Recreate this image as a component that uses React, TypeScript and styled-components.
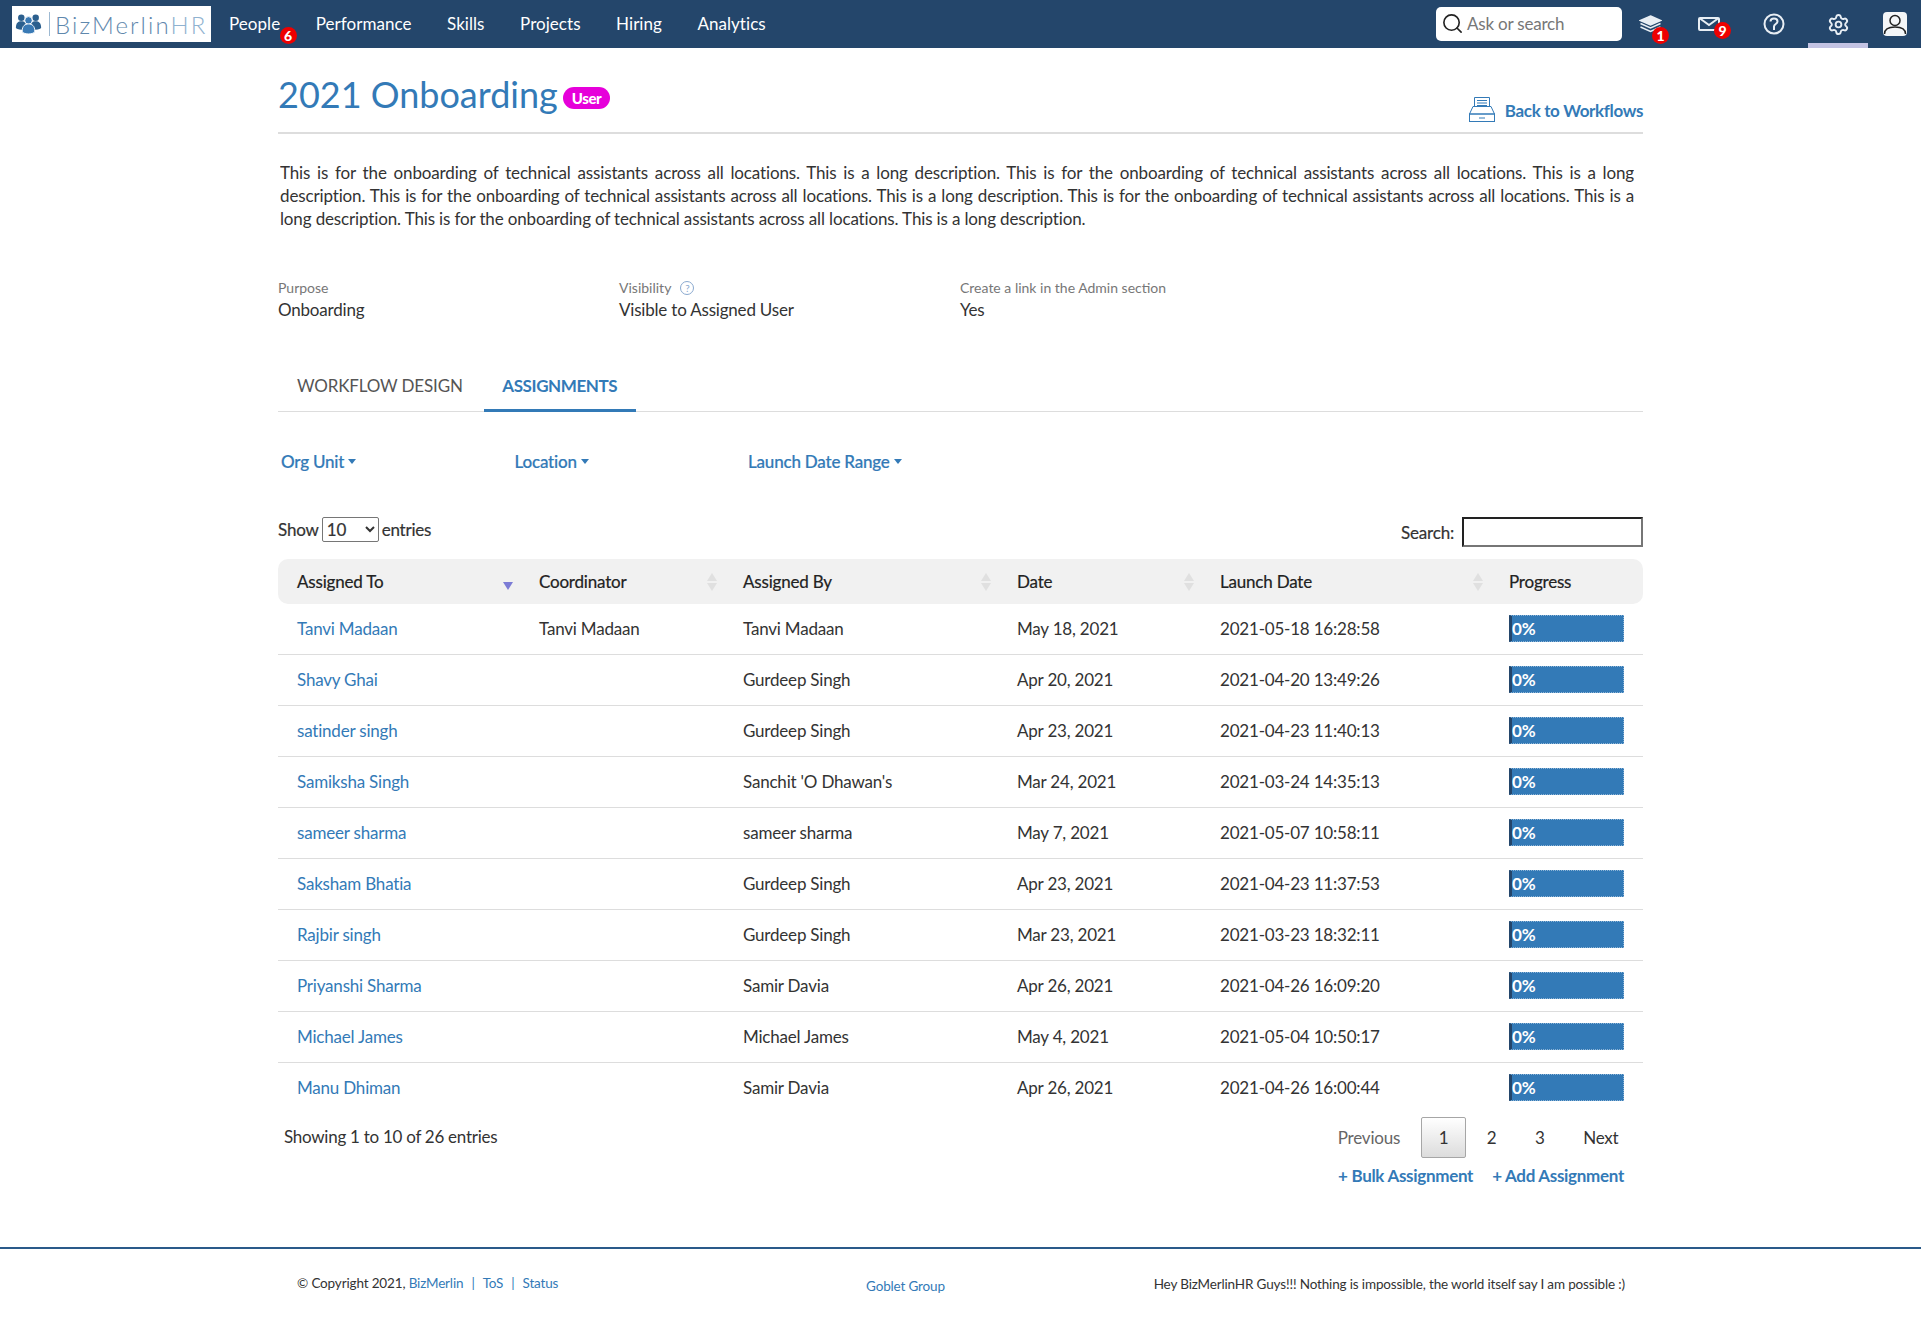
import styled, { createGlobalStyle } from 'styled-components'
import { Search as SearchIcon, Settings } from 'lucide-react'

const GlobalStyle = createGlobalStyle`
  * {
    box-sizing: border-box;
  }
  html, body {
    margin: 0;
    background: #ffffff;
  }
  body {
    font-family: Lato, "Open Sans", sans-serif;
    font-size: 17px;
    line-height: 23px;
    letter-spacing: -0.2px;
    color: #333333;
  }
  a {
    color: #337ab7;
    text-decoration: none;
  }
`

const rows = [
  ['Tanvi Madaan', 'Tanvi Madaan', 'Tanvi Madaan', 'May 18, 2021', '2021-05-18 16:28:58'],
  ['Shavy Ghai', '', 'Gurdeep Singh', 'Apr 20, 2021', '2021-04-20 13:49:26'],
  ['satinder singh', '', 'Gurdeep Singh', 'Apr 23, 2021', '2021-04-23 11:40:13'],
  ['Samiksha Singh', '', "Sanchit 'O Dhawan's", 'Mar 24, 2021', '2021-03-24 14:35:13'],
  ['sameer sharma', '', 'sameer sharma', 'May 7, 2021', '2021-05-07 10:58:11'],
  ['Saksham Bhatia', '', 'Gurdeep Singh', 'Apr 23, 2021', '2021-04-23 11:37:53'],
  ['Rajbir singh', '', 'Gurdeep Singh', 'Mar 23, 2021', '2021-03-23 18:32:11'],
  ['Priyanshi Sharma', '', 'Samir Davia', 'Apr 26, 2021', '2021-04-26 16:09:20'],
  ['Michael James', '', 'Michael James', 'May 4, 2021', '2021-05-04 10:50:17'],
  ['Manu Dhiman', '', 'Samir Davia', 'Apr 26, 2021', '2021-04-26 16:00:44']
]

const description =
  'This is for the onboarding of technical assistants across all locations. This is a long description. '

function LogoMark() {
  return (
    <svg width="27" height="22" viewBox="0 0 30 24">
      <g fill="#2b5f8e">
        <circle cx="7" cy="5" r="3.6" />
        <circle cx="23" cy="5" r="3.6" />
        <path d="M1 16c0-5 2.500-7 6-7s6 2 6 7c0 3-12 3-12 0z" />
        <path d="M17 16c0-5 2.500-7 6-7s6 2 6 7c0 3-12 3-12 0z" />
      </g>
      <circle cx="15" cy="8" r="4.200" fill="#3a7ab5" stroke="#fff" strokeWidth="1" />
      <path d="M8 20c0-6 3-8 7-8s7 2 7 8c0 4-14 4-14 0z" fill="#3a7ab5" stroke="#fff" strokeWidth="1" />
    </svg>
  )
}

function LayersIcon() {
  return (
    <svg width="23" height="18" viewBox="0 0 23 18" fill="none" stroke="#e8eef4" strokeWidth="1.500">
      <path d="M11.500 1 21.500 5.500l-10 4.500-10-4.500z" fill="#e8eef4" />
      <path d="M1.500 8.500l10 4.500 10-4.500" />
      <path d="M1.500 12l10 4.500 10-4.500" />
    </svg>
  )
}

function MailIcon() {
  return (
    <svg width="22" height="14" viewBox="0 0 22 14" fill="none" stroke="#e8eef4" strokeWidth="2">
      <rect x="1" y="1" width="20" height="12" rx="1" />
      <path d="M2 1.500 11 8l9-6.500" />
    </svg>
  )
}

function HelpIcon() {
  return (
    <svg width="22" height="22" viewBox="0 0 22 22" fill="none" stroke="#e8eef4" strokeWidth="2">
      <circle cx="11" cy="11" r="9.500" />
      <path d="M7.500 8.500C7.500 6.500 9 5.500 11 5.500s3.500 1.200 3.500 3c0 2.500-3.500 2.500-3.500 5V17" />
    </svg>
  )
}

function UserIcon() {
  return (
    <svg width="24" height="24" viewBox="0 0 24 24">
      <rect width="24" height="24" rx="4" fill="#f4f6f8" />
      <circle cx="12" cy="8.500" r="5" fill="none" stroke="#222" strokeWidth="1.500" />
      <path d="M1.500 22c0-5 4-7 10.500-7s10.500 2 10.500 7" fill="none" stroke="#222" strokeWidth="1.500" />
    </svg>
  )
}

function DrawerIcon() {
  return (
    <svg width="26" height="25" viewBox="0 0 26 25" fill="none" stroke="#337ab7" strokeWidth="1">
      <path d="M5.500 9V.5h15V9" />
      <path d="M8 3.500h10M8 6h10M8 8.500h10" />
      <path d="M4 9.500h18l3.500 7.500H.5z" />
      <rect x=".5" y="17" width="25" height="7.500" />
      <path d="M10 21h6" />
    </svg>
  )
}

function SortIcon({ active }: { active?: boolean }) {
  return (
    <SortWrap>
      {!active && <SortUp />}
      <SortDown $active={active} />
    </SortWrap>
  )
}

export default function App() {
  return (
    <>
      <GlobalStyle />
      <TopBar>
        <Logo>
          <LogoMark />
          <LogoDivider />
          <LogoText>
            BizMerlin<LogoAccent>HR</LogoAccent>
          </LogoText>
        </Logo>
        <NavItem>
          People
          <PeopleBadge>6</PeopleBadge>
        </NavItem>
        <NavItem>Performance</NavItem>
        <NavItem>Skills</NavItem>
        <NavItem>Projects</NavItem>
        <NavItem>Hiring</NavItem>
        <NavItem>Analytics</NavItem>
        <NavRight>
          <AskBox>
            <SearchIcon size={23} color="#222" strokeWidth={1.7} />
            <span>Ask or search</span>
          </AskBox>
          <NavIcon $width={56}>
            <LayersIcon />
            <IconBadge $top={27} $left={30}>1</IconBadge>
          </NavIcon>
          <NavIcon $width={62}>
            <MailIcon />
            <IconBadge $top={22} $left={36}>9</IconBadge>
          </NavIcon>
          <NavIcon $width={68}>
            <HelpIcon />
          </NavIcon>
          <NavIcon $width={60} $active>
            <Settings size={23} color="#e8eef4" strokeWidth={2} />
          </NavIcon>
          <NavIcon $width={53}>
            <UserIcon />
          </NavIcon>
        </NavRight>
      </TopBar>

      <Page>
        <TitleRow>
          <Title>
            2021 Onboarding <UserPill>User</UserPill>
          </Title>
          <BackLink href="#">
            <DrawerIcon />
            Back to Workflows
          </BackLink>
        </TitleRow>

        <Description>
          {description}
          {description}
          {description}
          {description}
          {description}
        </Description>

        <MetaRow>
          <div>
            <MetaLabel>Purpose</MetaLabel>
            <div>Onboarding</div>
          </div>
          <div>
            <MetaLabel>
              Visibility <HintMark>?</HintMark>
            </MetaLabel>
            <div>Visible to Assigned User</div>
          </div>
          <div>
            <MetaLabel>Create a link in the Admin section</MetaLabel>
            <div>Yes</div>
          </div>
        </MetaRow>

        <Tabs>
          <Tab>WORKFLOW DESIGN</Tab>
          <Tab $active>ASSIGNMENTS</Tab>
        </Tabs>

        <Filters>
          <Filter href="#">
            Org Unit
            <Caret />
          </Filter>
          <Filter href="#">
            Location
            <Caret />
          </Filter>
          <Filter href="#">
            Launch Date Range
            <Caret />
          </Filter>
        </Filters>

        <TableControls>
          <ShowEntries>
            Show
            <EntriesSelect defaultValue="10">
              <option>10</option>
              <option>25</option>
              <option>50</option>
            </EntriesSelect>
            entries
          </ShowEntries>
          <SearchLabel>
            Search:
            <SearchInput type="text" />
          </SearchLabel>
        </TableControls>

        <Table>
          <colgroup>
            <col width="242" />
            <col width="204" />
            <col width="274" />
            <col width="203" />
            <col width="289" />
            <col width="153" />
          </colgroup>
          <thead>
            <tr>
              <HeadCell>
                <HeadInner>
                  Assigned To
                  <SortIcon active />
                </HeadInner>
              </HeadCell>
              <HeadCell>
                <HeadInner>
                  Coordinator
                  <SortIcon />
                </HeadInner>
              </HeadCell>
              <HeadCell>
                <HeadInner>
                  Assigned By
                  <SortIcon />
                </HeadInner>
              </HeadCell>
              <HeadCell>
                <HeadInner>
                  Date
                  <SortIcon />
                </HeadInner>
              </HeadCell>
              <HeadCell>
                <HeadInner>
                  Launch Date
                  <SortIcon />
                </HeadInner>
              </HeadCell>
              <HeadCell>Progress</HeadCell>
            </tr>
          </thead>
          <tbody>
            {rows.map((row) => (
              <Row key={row[4]}>
                <Cell>
                  <a href="#">{row[0]}</a>
                </Cell>
                <Cell>{row[1]}</Cell>
                <Cell>{row[2]}</Cell>
                <Cell>{row[3]}</Cell>
                <Cell>{row[4]}</Cell>
                <Cell>
                  <ProgressBar>0%</ProgressBar>
                </Cell>
              </Row>
            ))}
          </tbody>
        </Table>

        <TableFooter>
          <EntriesInfo>Showing 1 to 10 of 26 entries</EntriesInfo>
          <FooterActions>
            <Pagination>
              <PageLink $muted>Previous</PageLink>
              <PageLink $current>1</PageLink>
              <PageLink>2</PageLink>
              <PageLink>3</PageLink>
              <PageLink>Next</PageLink>
            </Pagination>
            <AddLinks>
              <a href="#">+ Bulk Assignment</a>
              <a href="#">+ Add Assignment</a>
            </AddLinks>
          </FooterActions>
        </TableFooter>
      </Page>

      <Footer>
        <FooterInner>
          <div>
            © Copyright 2021, <a href="#">BizMerlin</a>
            <FooterSep>|</FooterSep>
            <a href="#">ToS</a>
            <FooterSep>|</FooterSep>
            <a href="#">Status</a>
          </div>
          <GobletLink href="#">Goblet Group</GobletLink>
          <Tagline>Hey BizMerlinHR Guys!!! Nothing is impossible, the world itself say I am possible :)</Tagline>
        </FooterInner>
      </Footer>
    </>
  )
}

const TopBar = styled.header`
  display: flex;
  align-items: center;
  height: 48px;
  padding-left: 12px;
  background: #24466b;
`

const Logo = styled.div`
  display: flex;
  align-items: center;
  gap: 7px;
  width: 199px;
  height: 36px;
  padding-left: 3px;
  background: #ffffff;
`

const LogoDivider = styled.span`
  width: 1px;
  height: 24px;
  background: #9db9d2;
`

const LogoText = styled.span`
  margin-left: -2px;
  font-size: 24px;
  font-weight: 300;
  letter-spacing: 2.100px;
  white-space: nowrap;
  color: #5f88ad;
`

const LogoAccent = styled.span`
  color: #8fb2d0;
`

const NavItem = styled.a`
  position: relative;
  padding: 0 17.500px 2px;
  margin-left: 0.500px;
  font-size: 17px;
  letter-spacing: 0.05px;
  color: #ffffff;
`

const PeopleBadge = styled.span`
  position: absolute;
  top: 15px;
  left: 68px;
  width: 17px;
  height: 17px;
  border-radius: 50%;
  background: #ee0000;
  font-size: 14px;
  font-weight: 900;
  line-height: 17px;
  text-align: center;
  color: #ffffff;
`

const NavRight = styled.div`
  display: flex;
  align-items: center;
  height: 100%;
  margin-left: auto;
`

const AskBox = styled.div`
  display: flex;
  align-items: center;
  gap: 3px;
  width: 186px;
  height: 34px;
  padding: 0 0 2px 5px;
  border-radius: 5px;
  background: #ffffff;
  font-size: 17px;
  color: #777777;
`

const NavIcon = styled.div<{ $active?: boolean; $width: number }>`
  position: relative;
  display: flex;
  align-items: center;
  justify-content: center;
  width: ${(p) => p.$width}px;
  height: 100%;
  padding-top: 5px;
  border-bottom: 5px solid ${(p) => (p.$active ? '#c3c3e3' : 'transparent')};
`

const IconBadge = styled.span<{ $top: number; $left: number }>`
  position: absolute;
  top: ${(p) => p.$top}px;
  left: ${(p) => p.$left}px;
  width: 17px;
  height: 17px;
  border-radius: 50%;
  background: #ee0000;
  font-size: 14px;
  font-weight: 900;
  line-height: 17px;
  text-align: center;
  color: #ffffff;
`

const Page = styled.main`
  width: 1365px;
  margin-left: 278px;
`

const TitleRow = styled.div`
  display: flex;
  justify-content: space-between;
  align-items: flex-end;
  height: 86px;
  padding-bottom: 10px;
  border-bottom: 2px solid #dddddd;
`

const Title = styled.h1`
  display: flex;
  align-items: center;
  gap: 5px;
  margin: 0 0 5px;
  font-size: 36px;
  font-weight: 400;
  line-height: 46px;
  letter-spacing: 0;
  color: #337ab7;
`

const UserPill = styled.span`
  margin-top: 8px;
  padding: 0 9px;
  border-radius: 12px;
  background: #e600da;
  font-size: 15px;
  font-weight: 900;
  line-height: 22px;
  letter-spacing: -0.4px;
  color: #ffffff;
`

const BackLink = styled.a`
  display: flex;
  align-items: flex-end;
  gap: 10px;
  font-size: 17px;
  font-weight: 700;
  line-height: 22px;
  letter-spacing: -0.35px;
`

const Description = styled.p`
  width: 1354px;
  height: 69px;
  margin: 27px 0 0 2px;
  letter-spacing: -0.14px;
  text-align: justify;
  overflow: hidden;
`

const MetaRow = styled.div`
  display: grid;
  grid-template-columns: 341px 341px 341px;
  margin-top: 47px;
`

const MetaLabel = styled.div`
  display: flex;
  align-items: center;
  gap: 9px;
  font-size: 14px;
  line-height: 21px;
  letter-spacing: 0;
  color: #777777;
`

const HintMark = styled.span`
  display: inline-block;
  width: 14px;
  height: 14px;
  border: 1px solid #8aa9cf;
  border-radius: 50%;
  font-size: 10px;
  line-height: 12px;
  text-align: center;
  color: #8aa9cf;
`

const Tabs = styled.div`
  display: flex;
  height: 53px;
  margin-top: 38px;
  border-bottom: 1px solid #dddddd;
`

const Tab = styled.a<{ $active?: boolean }>`
  display: flex;
  align-items: center;
  justify-content: center;
  height: 53px;
  padding: ${(p) => (p.$active ? '3px 18.500px 0' : '3px 21px 0 19px')};
  border-bottom: 3px solid ${(p) => (p.$active ? '#337ab7' : 'transparent')};
  font-size: 17px;
  font-weight: ${(p) => (p.$active ? 700 : 400)};
  letter-spacing: ${(p) => (p.$active ? '-0.4px' : '-0.15px')};
  color: ${(p) => (p.$active ? '#337ab7' : '#555555')};
`

const Filters = styled.div`
  display: grid;
  grid-template-columns: 233.500px 233.500px auto;
  margin-top: 38px;
  padding-left: 3px;
`

const Filter = styled.a`
  display: flex;
  align-items: center;
  font-weight: 500;
  -webkit-text-stroke: 0.2px #337ab7;
`

const Caret = styled.span`
  width: 0;
  height: 0;
  margin-left: 4px;
  border-top: 5px solid #337ab7;
  border-left: 4.500px solid transparent;
  border-right: 4.500px solid transparent;
`

const TableControls = styled.div`
  display: flex;
  align-items: flex-start;
  justify-content: space-between;
  margin-top: 44px;
`

const ShowEntries = styled.label`
  display: flex;
  align-items: center;
  gap: 3px;
  height: 25px;
  -webkit-text-stroke: 0.2px #333333;
`

const EntriesSelect = styled.select`
  width: 57px;
  height: 25px;
  padding-left: 0;
  border: 1px solid #767676;
  border-radius: 2px;
  background: #ffffff;
  font-family: inherit;
  font-size: 17px;
  color: #333333;
`

const SearchLabel = styled.label`
  display: flex;
  align-items: center;
  gap: 8px;
  -webkit-text-stroke: 0.2px #333333;
`

const SearchInput = styled.input`
  width: 181px;
  height: 30px;
  border: 2px solid;
  border-color: #222222 #767676 #767676 #222222;
  background: #ffffff;
`

const Table = styled.table`
  width: 1365px;
  margin-top: 12px;
  border-collapse: separate;
  border-spacing: 0;
  table-layout: fixed;
`

const HeadCell = styled.th`
  height: 45px;
  padding: 0 0 0 19px;
  background: #f1f1f1;
  font-size: 17px;
  font-weight: 400;
  text-align: left;
  color: #222222;
  -webkit-text-stroke: 0.2px #222222;

  &:first-child {
    border-radius: 10px 0 0 10px;
  }
  &:last-child {
    border-radius: 0 10px 10px 0;
  }
`

const HeadInner = styled.div`
  display: flex;
  align-items: center;
  justify-content: space-between;
  padding-right: 7px;
`

const SortWrap = styled.span`
  display: flex;
  flex-direction: column;
  gap: 2px;
  justify-content: center;
  min-height: 19px;
`

const SortUp = styled.span`
  width: 0;
  height: 0;
  border-bottom: 8px solid #e0e0e0;
  border-left: 5px solid transparent;
  border-right: 5px solid transparent;
`

const SortDown = styled.span<{ $active?: boolean }>`
  width: 0;
  height: 0;
  margin-top: ${(p) => (p.$active ? '9px' : '0')};
  border-top: 8px solid ${(p) => (p.$active ? '#7c7cd6' : '#e0e0e0')};
  border-left: 5px solid transparent;
  border-right: 5px solid transparent;
`

const Row = styled.tr`
  &:not(:last-child) td {
    border-bottom: 1px solid #dddddd;
  }
`

const Cell = styled.td`
  height: 51px;
  padding: 0 0 2px 19px;
  color: #333333;
`

const ProgressBar = styled.div`
  width: 115px;
  height: 27px;
  border: 1px dotted #8db4d6;
  border-left: 3px solid #24466b;
  background: #337ab7;
  font-weight: 700;
  line-height: 25px;
  color: #ffffff;
`

const TableFooter = styled.div`
  display: flex;
  justify-content: space-between;
  padding: 3px 0 0 6px;
`

const EntriesInfo = styled.div`
  margin-top: 8px;
  letter-spacing: -0.27px;
`

const FooterActions = styled.div`
  display: flex;
  flex-direction: column;
  align-items: flex-end;
  padding-right: 7px;
`

const Pagination = styled.div`
  display: flex;
  align-items: center;
  gap: 3.500px;
`

const PageLink = styled.a<{ $current?: boolean; $muted?: boolean }>`
  display: flex;
  align-items: center;
  height: 41px;
  padding: 0 16.500px;
  border: 1px solid ${(p) => (p.$current ? '#a6a6a6' : 'transparent')};
  border-radius: 2px;
  background: ${(p) => (p.$current ? 'linear-gradient(to bottom, #ffffff 0%, #dcdcdc 100%)' : 'transparent')};
  color: ${(p) => (p.$muted ? '#666666' : '#333333')};
`

const AddLinks = styled.div`
  display: flex;
  gap: 19px;
  margin: 6px 12px 0 0;
  font-weight: 700;
  letter-spacing: -0.3px;
`

const Footer = styled.footer`
  height: 94px;
  margin-top: 60px;
  border-top: 2px solid #2a5a8a;
`

const FooterInner = styled.div`
  display: grid;
  grid-template-columns: 569px auto 1fr;
  width: 1365px;
  margin-left: 278px;
  padding: 24px 18px 0 19px;
  font-size: 13.500px;
  line-height: 20px;
  letter-spacing: -0.15px;
`

const FooterSep = styled.span`
  margin: 0 8px;
  color: #337ab7;
`

const GobletLink = styled.a`
  margin-top: 3px;
`

const Tagline = styled.div`
  margin-top: 1px;
  text-align: right;
`
